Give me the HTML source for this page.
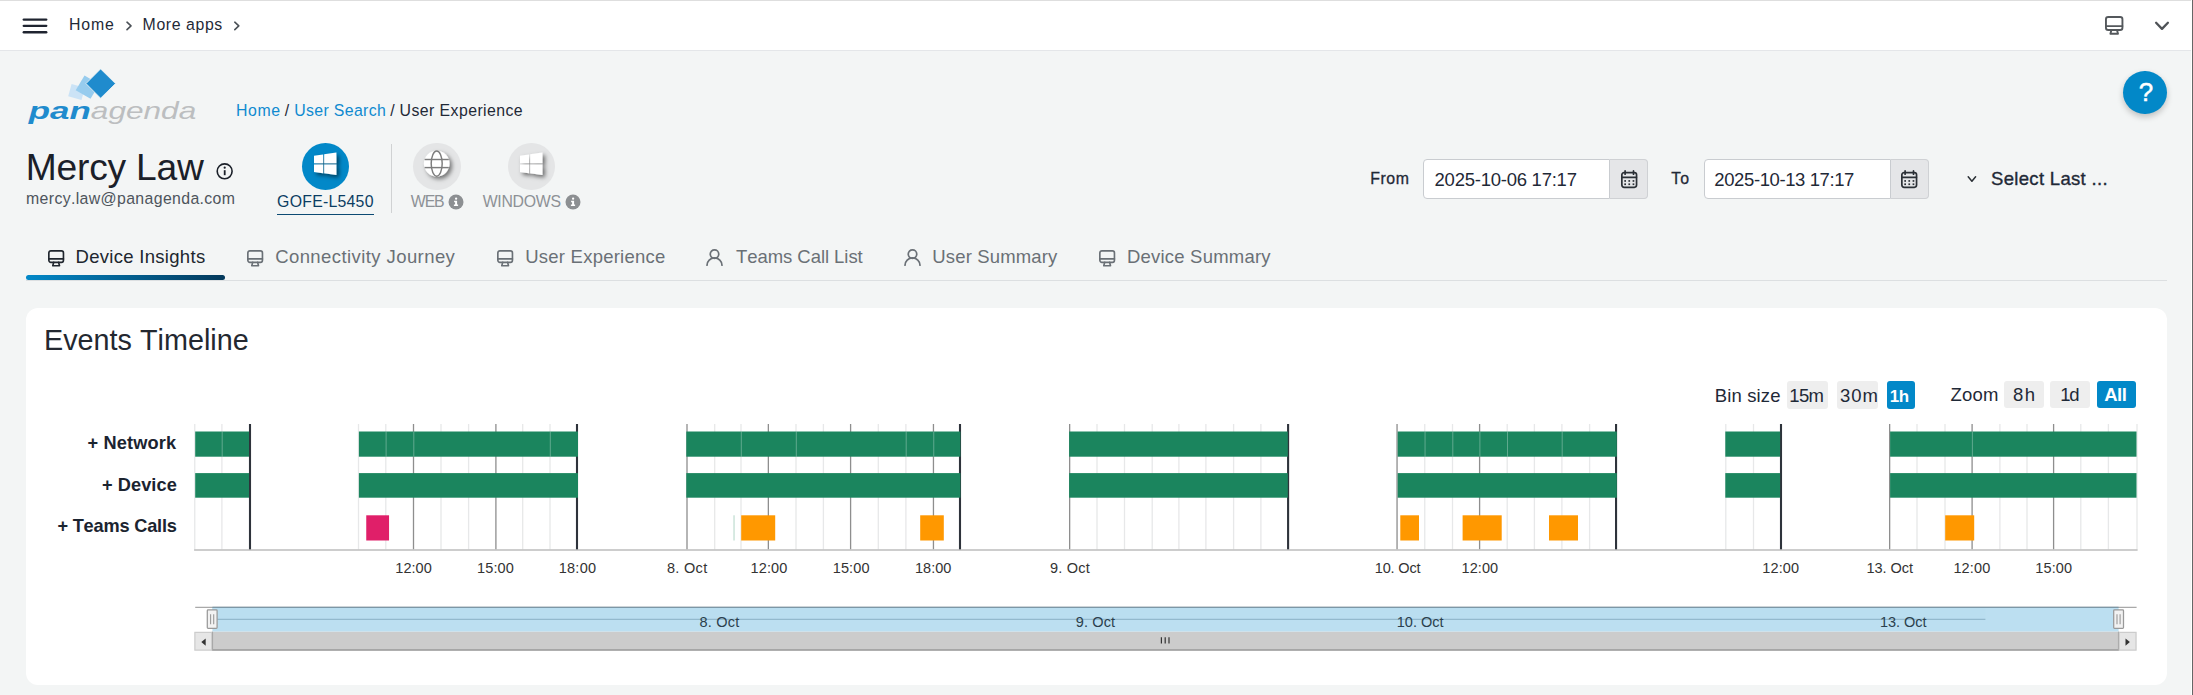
<!DOCTYPE html><html><head><meta charset="utf-8"><title>User Experience</title><style>
html,body{margin:0;padding:0;}
body{width:2193px;height:695px;overflow:hidden;background:#f3f5f5;position:relative;font-family:"Liberation Sans",sans-serif;}
.t{position:absolute;white-space:nowrap;display:block;font-kerning:none;}
.abs{position:absolute;}
#topbar{left:0;top:0;width:2193px;height:50px;background:#fff;border-top:1px solid #dedede;border-bottom:1px solid #e4e6e9;box-sizing:content-box;height:49px;}
#card{left:26px;top:308px;width:2141px;height:377px;background:#fff;border-radius:12px;}
.btn{position:absolute;border-radius:3px;background:#eeeeee;}
.btn.on{background:#0288c8;}
.circ{position:absolute;border-radius:50%;}
.inp{position:absolute;box-sizing:border-box;background:#fff;border:1px solid #c9ccd0;border-radius:4px 0 0 4px;}
.ibtn{position:absolute;box-sizing:border-box;background:#e5e6e8;border:1px solid #cfd1d4;border-left:none;border-radius:0 4px 4px 0;}
</style></head><body>
<div id="topbar" class="abs"></div>
<svg class="abs" style="left:0;top:0" width="300" height="50" viewBox="0 0 300 50"><g stroke="#1f2430" stroke-width="2.4" stroke-linecap="round"><line x1="23.8" y1="19.6" x2="46.2" y2="19.6"/><line x1="23.8" y1="25.85" x2="46.2" y2="25.85"/><line x1="23.8" y1="32.2" x2="46.2" y2="32.2"/></g><g fill="none" stroke="#4b5157" stroke-width="1.6" stroke-linecap="round" stroke-linejoin="round"><polyline points="127,22.2 131,25.9 127,29.6"/><polyline points="234.8,22.2 238.8,25.9 234.8,29.6"/></g></svg>
<span class="t" style="left:68.90px;top:15.70px;font-size:15.85px;line-height:17px;color:#1f2937;letter-spacing:0.875px;">Home</span>
<span class="t" style="left:142.60px;top:15.70px;font-size:15.85px;line-height:17px;color:#1f2937;letter-spacing:0.598px;">More apps</span>
<svg class="abs" style="left:2105.1px;top:15.9px;overflow:visible" width="18.40" height="18.70" viewBox="0 0 18.4 18.7"><g fill="none" stroke="#54585c" stroke-width="1.90" stroke-linejoin="round" stroke-linecap="round"><rect x="0.95" y="0.95" width="16.5" height="13" rx="2.3"/><line x1="1" y1="10.1" x2="17.4" y2="10.1"/><path d="M6.4 14 L5.4 17.75 L13 17.75 L12 14"/></g></svg>
<svg class="abs" style="left:2150px;top:15px" width="24" height="20" viewBox="0 0 24 20"><polyline points="6.1,7.8 12,13.9 17.9,7.8" fill="none" stroke="#4f5357" stroke-width="2.3" stroke-linecap="round" stroke-linejoin="round"/></svg>
<div class="abs" style="left:2191px;top:0;width:1px;height:695px;background:#fff"></div>
<div class="abs" style="left:2192px;top:0;width:1px;height:695px;background:#666"></div>
<svg class="abs" style="left:20px;top:60px" width="190" height="70" viewBox="20 60 190 70"><polygon points="71.6,84 84.9,87.8 81.5,100.1 68.2,96.3" fill="#cbe3f6"/><polygon points="84.5,75.6 99.3,84.2 90.5,98.8 75.7,90.2" fill="#97ccee"/><polygon points="100.6,68.9 115.5,83.6 100.6,98.2 86,83.6" fill="#1f8bcd" stroke="#f3f5f5" stroke-width="0.8"/><text x="28.8" y="119.3" font-family="Liberation Sans, sans-serif" font-weight="700" font-style="italic" font-size="23.8" fill="#1f8bcd" textLength="62" lengthAdjust="spacingAndGlyphs">pan</text><text x="90.8" y="119.3" font-family="Liberation Sans, sans-serif" font-style="italic" font-size="23.8" fill="#bcbec0" textLength="105.5" lengthAdjust="spacingAndGlyphs">agenda</text></svg>
<span class="t" style="left:236.10px;top:101.80px;font-size:15.85px;line-height:17px;color:#0f8ad0;letter-spacing:0.542px;">Home</span>
<span class="t" style="left:284.80px;top:101.80px;font-size:15.85px;line-height:17px;color:#1f2937;">/</span>
<span class="t" style="left:294.28px;top:101.80px;font-size:15.85px;line-height:17px;color:#0f8ad0;letter-spacing:0.346px;">User Search</span>
<span class="t" style="left:390.30px;top:101.80px;font-size:15.85px;line-height:17px;color:#1f2937;">/</span>
<span class="t" style="left:399.58px;top:101.80px;font-size:15.85px;line-height:17px;color:#1f2937;letter-spacing:0.426px;">User Experience</span>
<div class="circ" style="left:2123px;top:70.7px;width:44px;height:43.6px;background:#0288c8;box-shadow:0 3px 6px rgba(0,0,0,.22)"></div>
<span class="t" style="left:2138.64px;top:78.20px;font-size:25.9px;line-height:28px;color:#fff;-webkit-text-stroke:0.5px #fff;">?</span>
<span class="t" style="left:25.85px;top:145.80px;font-size:37.2px;line-height:42px;color:#1b2029;letter-spacing:-0.235px;">Mercy Law</span>
<svg class="abs" style="left:214px;top:161px" width="22" height="22" viewBox="214 161 22 22"><circle cx="224.65" cy="171.3" r="7.45" fill="none" stroke="#1b2029" stroke-width="1.6"/><rect x="223.8" y="170.2" width="1.8" height="5" fill="#1b2029"/><circle cx="224.7" cy="167.7" r="1.1" fill="#1b2029"/></svg>
<span class="t" style="left:26.05px;top:190.10px;font-size:15.85px;line-height:17px;color:#4d545c;letter-spacing:0.359px;">mercy.law@panagenda.com</span>
<div class="circ" style="left:302.1px;top:142.8px;width:47px;height:47px;background:#0288c8"></div>
<svg class="abs" style="left:305.8px;top:142.8px;overflow:visible" width="40" height="42" viewBox="-160 -160 800 840"><defs><filter id="sh313" x="-50%" y="-50%" width="200%" height="200%"><feDropShadow dx="50" dy="50" stdDeviation="45" flood-color="#000" flood-opacity="0.55"/></filter></defs><path d="M0 93.7l183.6-25.3v177.4H0V93.7zm0 324.6l183.6 25.3V268.4H0v149.9zm203.8 28L448 480V268.4H203.8v177.9zm0-380.6v180.1H448V32L203.8 65.7z" fill="#fff" filter="url(#sh313)"/></svg>
<span class="t" style="left:277.10px;top:193.00px;font-size:15.85px;line-height:17px;color:#0b3d63;letter-spacing:0.239px;">GOFE-L5450</span>
<div class="abs" style="left:277px;top:213.5px;width:97px;height:1.4px;background:#0c4a73"></div>
<div class="abs" style="left:390.8px;top:144.3px;width:1.2px;height:69.2px;background:#d0d2d3"></div>
<div class="circ" style="left:413px;top:142.7px;width:47.6px;height:47.6px;background:#e4e5e6"></div>
<svg class="abs" style="left:416px;top:143px;overflow:visible" width="42" height="42" viewBox="416 143 42 42"><defs><filter id="shg" x="-50%" y="-50%" width="200%" height="200%"><feDropShadow dx="2.5" dy="2.5" stdDeviation="2.2" flood-color="#000" flood-opacity="0.5"/></filter></defs><circle cx="436.7" cy="163.6" r="12.8" fill="#fff" filter="url(#shg)"/><g fill="none" stroke="#7d7d7d" stroke-width="1.45"><ellipse cx="436.7" cy="163.6" rx="5.5" ry="12.6"/><line x1="424.6" y1="159.5" x2="448.8" y2="159.5"/><line x1="424.6" y1="167.6" x2="448.8" y2="167.6"/></g></svg>
<span class="t" style="left:410.83px;top:192.60px;font-size:15.85px;line-height:17px;color:#8d9196;letter-spacing:-1.149px;">WEB</span>
<svg class="abs" style="left:447.1px;top:192.5px" width="18" height="18" viewBox="-9 -9 18 18"><circle r="7.5" fill="#8c8f92"/><circle cx="0.1" cy="-3.3" r="1.15" fill="#fff"/><path d="M-1.9 -1.2 H1.1 V2.6 H2.1 V4 H-2.1 V2.6 H-0.9 V0.2 H-1.9 Z" fill="#fff"/></svg>
<div class="circ" style="left:507.7px;top:142.7px;width:47.6px;height:47.6px;background:#e4e5e6"></div>
<svg class="abs" style="left:511.9px;top:142.8px;overflow:visible" width="40" height="42" viewBox="-160 -160 800 840"><defs><filter id="sh519" x="-50%" y="-50%" width="200%" height="200%"><feDropShadow dx="50" dy="50" stdDeviation="45" flood-color="#000" flood-opacity="0.55"/></filter></defs><path d="M0 93.7l183.6-25.3v177.4H0V93.7zm0 324.6l183.6 25.3V268.4H0v149.9zm203.8 28L448 480V268.4H203.8v177.9zm0-380.6v180.1H448V32L203.8 65.7z" fill="#fff" filter="url(#sh519)"/></svg>
<span class="t" style="left:482.63px;top:192.60px;font-size:15.85px;line-height:17px;color:#8d9196;letter-spacing:-0.270px;">WINDOWS</span>
<svg class="abs" style="left:564.4px;top:192.5px" width="18" height="18" viewBox="-9 -9 18 18"><circle r="7.5" fill="#8c8f92"/><circle cx="0.1" cy="-3.3" r="1.15" fill="#fff"/><path d="M-1.9 -1.2 H1.1 V2.6 H2.1 V4 H-2.1 V2.6 H-0.9 V0.2 H-1.9 Z" fill="#fff"/></svg>
<span class="t" style="left:1370.30px;top:169.80px;font-size:15.85px;line-height:17px;color:#1f2937;letter-spacing:0.522px;-webkit-text-stroke:0.3px #1f2937;">From</span>
<div class="inp" style="left:1423px;top:159px;width:187px;height:40px"></div>
<div class="ibtn" style="left:1609.5px;top:159px;width:38.5px;height:40px"></div>
<span class="t" style="left:1434.57px;top:169.00px;font-size:18.5px;line-height:21px;color:#1f2937;letter-spacing:-0.247px;">2025-10-06 17:17</span>
<svg class="abs" style="left:1619.9px;top:168.8px" width="19" height="21" viewBox="-1 -1 19 21"><g fill="none" stroke="#2b3036" stroke-width="1.7" stroke-linecap="round" stroke-linejoin="round"><rect x="0.85" y="2.6" width="14.7" height="14.7" rx="2.2"/><line x1="1" y1="7.3" x2="15.4" y2="7.3"/><line x1="4.1" y1="0.9" x2="4.1" y2="4.2"/><line x1="12.5" y1="0.9" x2="12.5" y2="4.2"/></g><g fill="#2b3036"><rect x="3.3" y="10.1" width="1.7" height="1.7"/><rect x="7.4" y="10.1" width="1.7" height="1.7"/><rect x="11.6" y="10.1" width="1.7" height="1.7"/><rect x="3.3" y="13.4" width="1.7" height="1.7"/><rect x="7.4" y="13.4" width="1.7" height="1.7"/><rect x="11.6" y="13.4" width="1.7" height="1.7"/></g></svg>
<span class="t" style="left:1671.24px;top:169.80px;font-size:15.85px;line-height:17px;color:#1f2937;letter-spacing:-0.675px;-webkit-text-stroke:0.3px #1f2937;">To</span>
<div class="inp" style="left:1704px;top:159px;width:187px;height:40px"></div>
<div class="ibtn" style="left:1890.5px;top:159px;width:38.5px;height:40px"></div>
<span class="t" style="left:1714.37px;top:169.00px;font-size:18.5px;line-height:21px;color:#1f2937;letter-spacing:-0.407px;">2025-10-13 17:17</span>
<svg class="abs" style="left:1899.8px;top:168.8px" width="19" height="21" viewBox="-1 -1 19 21"><g fill="none" stroke="#2b3036" stroke-width="1.7" stroke-linecap="round" stroke-linejoin="round"><rect x="0.85" y="2.6" width="14.7" height="14.7" rx="2.2"/><line x1="1" y1="7.3" x2="15.4" y2="7.3"/><line x1="4.1" y1="0.9" x2="4.1" y2="4.2"/><line x1="12.5" y1="0.9" x2="12.5" y2="4.2"/></g><g fill="#2b3036"><rect x="3.3" y="10.1" width="1.7" height="1.7"/><rect x="7.4" y="10.1" width="1.7" height="1.7"/><rect x="11.6" y="10.1" width="1.7" height="1.7"/><rect x="3.3" y="13.4" width="1.7" height="1.7"/><rect x="7.4" y="13.4" width="1.7" height="1.7"/><rect x="11.6" y="13.4" width="1.7" height="1.7"/></g></svg>
<svg class="abs" style="left:1962px;top:170px" width="20" height="18" viewBox="1962 170 20 18"><polyline points="1968.2,176.8 1971.9,181.3 1975.6,176.8" fill="none" stroke="#2b3036" stroke-width="1.5" stroke-linecap="round" stroke-linejoin="round"/></svg>
<span class="t" style="left:1991.06px;top:167.90px;font-size:18.5px;line-height:21px;color:#1f2937;letter-spacing:0.318px;-webkit-text-stroke:0.35px #1f2937;">Select Last ...</span>
<div class="abs" style="left:26px;top:280px;width:2141px;height:1px;background:#dcdfe1"></div>
<div class="abs" style="left:26px;top:275px;width:199px;height:5.2px;border-radius:2.6px;background:linear-gradient(90deg,#0288c8 0%,#04395b 100%)"></div>
<svg class="abs" style="left:47.9px;top:249.7px;overflow:visible" width="16.30" height="16.57" viewBox="0 0 18.4 18.7"><g fill="none" stroke="#20262e" stroke-width="1.86" stroke-linejoin="round" stroke-linecap="round"><rect x="0.95" y="0.95" width="16.5" height="13" rx="2.3"/><line x1="1" y1="10.1" x2="17.4" y2="10.1"/><path d="M6.4 14 L5.4 17.75 L13 17.75 L12 14"/></g></svg>
<span class="t" style="left:75.53px;top:246.00px;font-size:18.5px;line-height:21px;color:#20262e;letter-spacing:0.299px;">Device Insights</span>
<svg class="abs" style="left:246.7px;top:249.7px;overflow:visible" width="16.30" height="16.57" viewBox="0 0 18.4 18.7"><g fill="none" stroke="#6a7076" stroke-width="1.86" stroke-linejoin="round" stroke-linecap="round"><rect x="0.95" y="0.95" width="16.5" height="13" rx="2.3"/><line x1="1" y1="10.1" x2="17.4" y2="10.1"/><path d="M6.4 14 L5.4 17.75 L13 17.75 L12 14"/></g></svg>
<span class="t" style="left:275.16px;top:246.00px;font-size:18.5px;line-height:21px;color:#6a7076;letter-spacing:0.419px;">Connectivity Journey</span>
<svg class="abs" style="left:497.3px;top:249.7px;overflow:visible" width="16.30" height="16.57" viewBox="0 0 18.4 18.7"><g fill="none" stroke="#6a7076" stroke-width="1.86" stroke-linejoin="round" stroke-linecap="round"><rect x="0.95" y="0.95" width="16.5" height="13" rx="2.3"/><line x1="1" y1="10.1" x2="17.4" y2="10.1"/><path d="M6.4 14 L5.4 17.75 L13 17.75 L12 14"/></g></svg>
<span class="t" style="left:525.17px;top:246.00px;font-size:18.5px;line-height:21px;color:#6a7076;letter-spacing:0.243px;">User Experience</span>
<svg class="abs" style="left:706.3px;top:248.9px" width="18" height="18" viewBox="0 0 18 18"><g fill="none" stroke="#6a7076" stroke-width="1.7" stroke-linecap="round"><circle cx="8.5" cy="5.1" r="4.25"/><path d="M1 16.2 A7.5 7.3 0 0 1 16 16.2"/></g></svg>
<span class="t" style="left:735.98px;top:246.00px;font-size:18.5px;line-height:21px;color:#6a7076;letter-spacing:-0.052px;">Teams Call List</span>
<svg class="abs" style="left:904.3px;top:248.9px" width="18" height="18" viewBox="0 0 18 18"><g fill="none" stroke="#6a7076" stroke-width="1.7" stroke-linecap="round"><circle cx="8.5" cy="5.1" r="4.25"/><path d="M1 16.2 A7.5 7.3 0 0 1 16 16.2"/></g></svg>
<span class="t" style="left:932.27px;top:246.00px;font-size:18.5px;line-height:21px;color:#6a7076;letter-spacing:0.156px;">User Summary</span>
<svg class="abs" style="left:1099.2px;top:249.7px;overflow:visible" width="16.30" height="16.57" viewBox="0 0 18.4 18.7"><g fill="none" stroke="#6a7076" stroke-width="1.86" stroke-linejoin="round" stroke-linecap="round"><rect x="0.95" y="0.95" width="16.5" height="13" rx="2.3"/><line x1="1" y1="10.1" x2="17.4" y2="10.1"/><path d="M6.4 14 L5.4 17.75 L13 17.75 L12 14"/></g></svg>
<span class="t" style="left:1126.88px;top:246.00px;font-size:18.5px;line-height:21px;color:#6a7076;letter-spacing:0.217px;">Device Summary</span>
<div id="card" class="abs"></div>
<span class="t" style="left:43.94px;top:324.10px;font-size:28.75px;line-height:32px;color:#232830;letter-spacing:0.022px;">Events Timeline</span>
<span class="t" style="left:1714.78px;top:384.90px;font-size:18.5px;line-height:21px;color:#1f2937;letter-spacing:0.138px;">Bin size</span>
<div class="btn" style="left:1787px;top:381.1px;width:41.2px;height:28.4px"></div>
<span class="t" style="left:1789.29px;top:384.90px;font-size:18.5px;line-height:21px;color:#1f2937;letter-spacing:-0.680px;">15m</span>
<div class="btn" style="left:1837.1px;top:381.1px;width:41px;height:28.4px"></div>
<span class="t" style="left:1840.10px;top:384.90px;font-size:18.5px;line-height:21px;color:#1f2937;letter-spacing:0.918px;">30m</span>
<div class="btn on" style="left:1886.9px;top:381.1px;width:27.9px;height:28.4px"></div>
<span class="t" style="left:1889.83px;top:386.90px;font-size:16.97px;line-height:19px;color:#fff;letter-spacing:-0.383px;font-weight:700;">1h</span>
<span class="t" style="left:1950.41px;top:383.60px;font-size:18.5px;line-height:21px;color:#1f2937;letter-spacing:0.206px;">Zoom</span>
<div class="btn" style="left:2003.9px;top:380.6px;width:40.1px;height:27.4px"></div>
<span class="t" style="left:2013.10px;top:383.60px;font-size:18.5px;line-height:21px;color:#1f2937;letter-spacing:1.328px;">8h</span>
<div class="btn" style="left:2050.1px;top:380.6px;width:39.8px;height:27.4px"></div>
<span class="t" style="left:2060.19px;top:383.60px;font-size:18.5px;line-height:21px;color:#1f2937;letter-spacing:-1.176px;">1d</span>
<div class="btn on" style="left:2096.8px;top:380.6px;width:39.6px;height:27.4px"></div>
<span class="t" style="left:2104.14px;top:383.60px;font-size:18.5px;line-height:21px;color:#fff;letter-spacing:-0.435px;font-weight:700;">All</span>
<span class="t" style="left:87.54px;top:433.00px;font-size:18.2px;line-height:20px;color:#1b2430;letter-spacing:0.145px;font-weight:700;">+ Network</span>
<span class="t" style="left:101.94px;top:474.70px;font-size:18.2px;line-height:20px;color:#1b2430;letter-spacing:0.073px;font-weight:700;">+ Device</span>
<span class="t" style="left:57.44px;top:515.90px;font-size:18.2px;line-height:20px;color:#1b2430;letter-spacing:-0.200px;font-weight:700;">+ Teams Calls</span>
<svg class="abs" style="left:0;top:0" width="2193" height="695" viewBox="0 0 2193 695" font-family="Liberation Sans, sans-serif"><path d="M194.75 424.1V549.4M221.90 424.1V549.4M358.50 424.1V549.4M385.80 424.1V549.4M441.00 424.1V549.4M468.60 424.1V549.4M522.70 424.1V549.4M550.00 424.1V549.4M714.70 424.1V549.4M741.00 424.1V549.4M796.00 424.1V549.4M823.40 424.1V549.4M878.30 424.1V549.4M905.90 424.1V549.4M1097.00 424.1V549.4M1124.50 424.1V549.4M1152.20 424.1V549.4M1178.90 424.1V549.4M1205.90 424.1V549.4M1233.60 424.1V549.4M1260.90 424.1V549.4M1424.75 424.1V549.4M1452.50 424.1V549.4M1507.20 424.1V549.4M1534.40 424.1V549.4M1561.90 424.1V549.4M1589.60 424.1V549.4M1725.80 424.1V549.4M1753.50 424.1V549.4M1917.00 424.1V549.4M1945.00 424.1V549.4M1999.90 424.1V549.4M2027.00 424.1V549.4M2080.80 424.1V549.4M2108.40 424.1V549.4M2137.00 424.1V549.4" stroke="#e7e8e9" stroke-width="1.3" fill="none"/><path d="M413.50 424.1V549.4M495.90 424.1V549.4M687.00 424.1V549.4M768.35 424.1V549.4M850.60 424.1V549.4M933.45 424.1V549.4M1069.65 424.1V549.4M1397.05 424.1V549.4M1479.60 424.1V549.4M1889.65 424.1V549.4M1972.10 424.1V549.4M2053.60 424.1V549.4" stroke="#8e8e8e" stroke-width="1.3" fill="none"/><path d="M250.00 424.1V550.0M577.00 424.1V550.0M960.00 424.1V550.0M1288.10 424.1V550.0M1616.05 424.1V550.0M1781.00 424.1V550.0" stroke="#2e333b" stroke-width="2.1" fill="none"/><rect x="195.20" y="431.5" width="53.80" height="25.20" fill="#1b855e"/><rect x="195.20" y="473.1" width="53.80" height="24.60" fill="#1b855e"/><rect x="358.90" y="431.5" width="219.10" height="25.20" fill="#1b855e"/><rect x="358.90" y="473.1" width="219.10" height="24.60" fill="#1b855e"/><rect x="686.30" y="431.5" width="274.10" height="25.20" fill="#1b855e"/><rect x="686.30" y="473.1" width="274.10" height="24.60" fill="#1b855e"/><rect x="1069.10" y="431.5" width="218.70" height="25.20" fill="#1b855e"/><rect x="1069.10" y="473.1" width="218.70" height="24.60" fill="#1b855e"/><rect x="1397.70" y="431.5" width="219.10" height="25.20" fill="#1b855e"/><rect x="1397.70" y="473.1" width="219.10" height="24.60" fill="#1b855e"/><rect x="1725.30" y="431.5" width="54.80" height="25.20" fill="#1b855e"/><rect x="1725.30" y="473.1" width="54.80" height="24.60" fill="#1b855e"/><rect x="1890.10" y="431.5" width="246.40" height="25.20" fill="#1b855e"/><rect x="1890.10" y="473.1" width="246.40" height="24.60" fill="#1b855e"/><path d="M222.20 431.5V456.7M386.10 431.5V456.7M413.80 431.5V456.7M550.30 431.5V456.7M741.30 431.5V456.7M796.30 431.5V456.7M906.20 431.5V456.7M933.75 431.5V456.7M1425.05 431.5V456.7M1452.80 431.5V456.7M1479.90 431.5V456.7M1507.50 431.5V456.7M1562.20 431.5V456.7M1972.40 431.5V456.7" stroke="#fff" stroke-opacity="0.38" stroke-width="0.8" fill="none"/><rect x="366.25" y="515.3" width="22.80" height="25.20" fill="#e01f69"/><rect x="733.1" y="515.3" width="1.90" height="25.20" fill="#d6e9e1"/><rect x="741.2" y="515.3" width="34.00" height="25.20" fill="#ff9800"/><rect x="920.2" y="515.3" width="23.60" height="25.20" fill="#ff9800"/><rect x="1400.3" y="515.3" width="18.70" height="25.20" fill="#ff9800"/><rect x="1462.6" y="515.3" width="39.10" height="25.20" fill="#ff9800"/><rect x="1549.0" y="515.3" width="29.00" height="25.20" fill="#ff9800"/><rect x="1945.2" y="515.3" width="29.00" height="25.20" fill="#ff9800"/><line x1="194.1" x2="2137.6" y1="550" y2="550" stroke="#bdbdbd" stroke-width="1.7"/></svg>
<span class="t" style="left:395.29px;top:559.90px;font-size:14.53px;line-height:16px;color:#333;letter-spacing:0.053px;">12:00</span>
<span class="t" style="left:476.99px;top:559.90px;font-size:14.53px;line-height:16px;color:#333;letter-spacing:0.128px;">15:00</span>
<span class="t" style="left:558.69px;top:559.90px;font-size:14.53px;line-height:16px;color:#333;letter-spacing:0.253px;">18:00</span>
<span class="t" style="left:666.97px;top:559.90px;font-size:14.53px;line-height:16px;color:#333;letter-spacing:0.296px;">8. Oct</span>
<span class="t" style="left:750.49px;top:559.90px;font-size:14.53px;line-height:16px;color:#333;letter-spacing:0.153px;">12:00</span>
<span class="t" style="left:832.69px;top:559.90px;font-size:14.53px;line-height:16px;color:#333;letter-spacing:0.128px;">15:00</span>
<span class="t" style="left:914.99px;top:559.90px;font-size:14.53px;line-height:16px;color:#333;">18:00</span>
<span class="t" style="left:1050.02px;top:559.90px;font-size:14.53px;line-height:16px;color:#333;letter-spacing:0.226px;">9. Oct</span>
<span class="t" style="left:1374.79px;top:559.90px;font-size:14.53px;line-height:16px;color:#333;letter-spacing:-0.171px;">10. Oct</span>
<span class="t" style="left:1461.49px;top:559.90px;font-size:14.53px;line-height:16px;color:#333;letter-spacing:0.078px;">12:00</span>
<span class="t" style="left:1762.29px;top:559.90px;font-size:14.53px;line-height:16px;color:#333;letter-spacing:0.128px;">12:00</span>
<span class="t" style="left:1866.49px;top:559.90px;font-size:14.53px;line-height:16px;color:#333;letter-spacing:-0.038px;">13. Oct</span>
<span class="t" style="left:1953.39px;top:559.90px;font-size:14.53px;line-height:16px;color:#333;letter-spacing:0.153px;">12:00</span>
<span class="t" style="left:2035.29px;top:559.90px;font-size:14.53px;line-height:16px;color:#333;letter-spacing:0.128px;">15:00</span>
<svg class="abs" style="left:0;top:596px" width="2193" height="64" viewBox="0 596 2193 64"><rect x="212.4" y="607.4" width="1906.2" height="24.4" fill="#bcdff1"/><rect x="212.4" y="607.4" width="1773" height="12" fill="#badef0"/><line x1="212.4" x2="1985.4" y1="619.4" y2="619.4" stroke="#93b9cd" stroke-width="1.2"/><line x1="195.2" x2="2136.6" y1="607.4" y2="607.4" stroke="#a9a9a9" stroke-width="1.2"/><line x1="212.4" x2="2118.6" y1="607.4" y2="607.4" stroke="#7c97a6" stroke-width="1.3"/><rect x="194.3" y="631.8" width="1942.4" height="18.9" fill="#f2f2f2"/><rect x="212" y="631.8" width="1906.8" height="18.3" fill="#cccccc"/><path d="M212.4 631.8V650H2118.6V631.8" fill="none" stroke="#999" stroke-width="1.3"/><rect x="194.9" y="632.4" width="16.8" height="17.7" fill="#e6e6e6" stroke="#ccc" stroke-width="1.2"/><rect x="2119.2" y="632.4" width="16.8" height="17.7" fill="#e6e6e6" stroke="#ccc" stroke-width="1.2"/><path d="M201.3 642.1L205.7 638.4V645.8Z" fill="#333"/><path d="M2129.9 642.1L2125.5 638.4V645.8Z" fill="#333"/><path d="M1161.4 637.2V643.6M1165.2 637.2V643.6M1169 637.2V643.6" stroke="#333" stroke-width="1.2" fill="none"/><rect x="207.30" y="609.9" width="9.8" height="18.4" rx="0.8" fill="#f2f2f2" stroke="#999" stroke-width="1.25"/><path d="M210.60 614.2V624.2M213.70 614.2V624.2" stroke="#999" stroke-width="1.1" fill="none"/><rect x="2113.70" y="609.9" width="9.8" height="18.4" rx="0.8" fill="#f2f2f2" stroke="#999" stroke-width="1.25"/><path d="M2117.00 614.2V624.2M2120.10 614.2V624.2" stroke="#999" stroke-width="1.1" fill="none"/></svg>
<span class="t" style="left:699.47px;top:614.00px;font-size:14.53px;line-height:16px;color:#2b3f4d;letter-spacing:0.236px;">8. Oct</span>
<span class="t" style="left:1075.72px;top:614.00px;font-size:14.53px;line-height:16px;color:#2b3f4d;letter-spacing:0.126px;">9. Oct</span>
<span class="t" style="left:1396.79px;top:614.00px;font-size:14.53px;line-height:16px;color:#2b3f4d;">10. Oct</span>
<span class="t" style="left:1879.89px;top:614.00px;font-size:14.53px;line-height:16px;color:#2b3f4d;letter-spacing:-0.021px;">13. Oct</span>
</body></html>
